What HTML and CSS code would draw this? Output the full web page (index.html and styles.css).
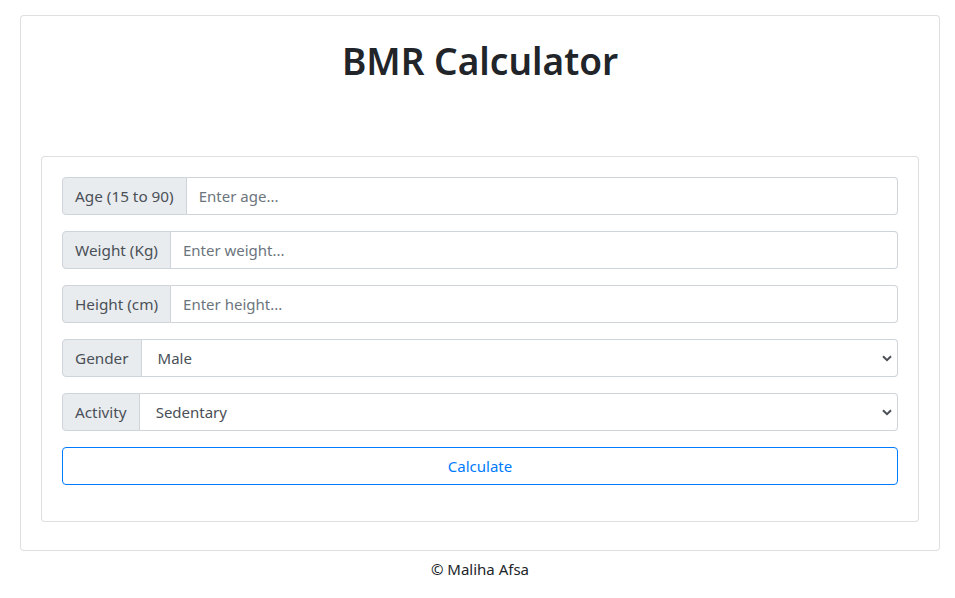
FILE: index.html
```html
<!DOCTYPE html>
<html lang="en">
<head>
<meta charset="utf-8">
<title>BMR Calculator</title>
<link rel="stylesheet" href="styles.css">
</head>
<body>
<div class="page">
  <div class="card outer">
    <h1 class="title">BMR Calculator</h1>
    <div class="card inner">
      <div class="group">
        <span class="addon">Age (15 to 90)</span>
        <input class="field" type="text" placeholder="Enter age...">
      </div>
      <div class="group">
        <span class="addon">Weight (Kg)</span>
        <input class="field" type="text" placeholder="Enter weight...">
      </div>
      <div class="group">
        <span class="addon">Height (cm)</span>
        <input class="field" type="text" placeholder="Enter height...">
      </div>
      <div class="group">
        <span class="addon">Gender</span>
        <div class="select-wrap">
          <select class="field select">
            <option>Male</option>
            <option>Female</option>
          </select>
          <svg class="chev" width="10" height="7" viewBox="0 0 10 7"><path d="M1 1.2 L5 5.2 L9 1.2" fill="none" stroke="#4a4f55" stroke-width="2"/></svg>
        </div>
      </div>
      <div class="group">
        <span class="addon">Activity</span>
        <div class="select-wrap">
          <select class="field select">
            <option>Sedentary</option>
            <option>Lightly active</option>
          </select>
          <svg class="chev" width="10" height="7" viewBox="0 0 10 7"><path d="M1 1.2 L5 5.2 L9 1.2" fill="none" stroke="#4a4f55" stroke-width="2"/></svg>
        </div>
      </div>
      <button class="btn" type="button">Calculate</button>
    </div>
  </div>
  <p class="footer">© Maliha Afsa</p>
</div>
</body>
</html>
```
FILE: styles.css
```css
* { box-sizing: border-box; }
html, body { margin: 0; padding: 0; background: #fff; }
body {
  font-family: "Noto Sans", "Open Sans", sans-serif;
  font-size: 15px;
  color: #212529;
  line-height: 1.5;
}
.page { padding: 15px 15px 0 20px; }
.card {
  border: 1px solid rgba(0,0,0,0.125);
  border-radius: 4px;
  background: #fff;
}
.outer { padding: 20px; height: 536px; }
.title {
  margin: 0;
  text-align: center;
  font-size: 37px;
  font-weight: 600;
  line-height: 50px;
  color: #212529;
}
.inner { margin-top: 70px; padding: 20px; }
.group {
  display: flex;
  height: 38px;
  margin-bottom: 16px;
}
.addon {
  display: flex;
  align-items: center;
  padding: 0 12px;
  background: #e9ecef;
  border: 1px solid #ced4da;
  border-radius: 4px 0 0 4px;
  color: #495057;
  white-space: nowrap;
  font-size: 15.3px;
}
.field {
  flex: 1;
  min-width: 0;
  height: 38px;
  border: 1px solid #ced4da;
  border-left: none;
  border-radius: 0 4px 4px 0;
  padding: 0 12px;
  font: inherit;
  font-size: 15px;
  color: #495057;
  background: #fff;
  outline: none;
}
.field::placeholder { color: #6c757d; }
.select-wrap { flex: 1; position: relative; display: flex; }
.select {
  appearance: none;
  -webkit-appearance: none;
  padding-left: 16px;
}
.chev { position: absolute; right: 6px; top: 16px; pointer-events: none; }
.btn {
  display: block;
  width: 100%;
  height: 38px;
  margin-bottom: 16px;
  border: 1px solid #007bff;
  border-radius: 4px;
  background: #fff;
  color: #007bff;
  font: inherit;
  font-size: 15px;
  cursor: pointer;
}
.footer {
  margin: 6px 0 0 0;
  text-align: center;
  font-size: 15px;
  line-height: 24px;
  color: #212529;
}
```
